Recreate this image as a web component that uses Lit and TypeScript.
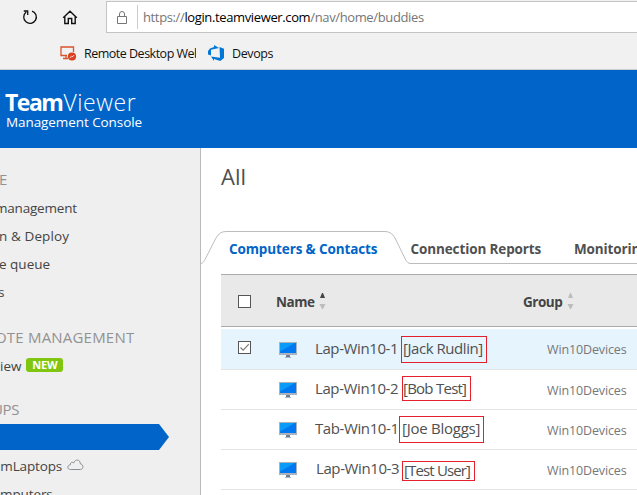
import { LitElement, html, css } from "lit";
import { customElement } from "lit/decorators.js";
import { classMap } from "lit/directives/class-map.js";

const monitor = html`<svg class="monitor" width="18" height="17" viewBox="0 0 18 17">
  <rect x="0" y="0" width="18" height="13" fill="#a9b4bf" />
  <rect x="1" y="1" width="16" height="10" fill="#0078f0" />
  <path d="M1 1H16L1 9.5Z" fill="#0a9af8" />
  <rect x="7" y="13" width="4" height="2" fill="#6f7f8e" />
  <rect x="6" y="15" width="6" height="1" fill="#a9b4bf" />
</svg>`;

interface Device { name: string; owner: string; cls: string; checked: boolean }

const devices: Device[] = [
  { name: "Lap-Win10-1", owner: "[Jack Rudlin]", cls: "r1", checked: true },
  { name: "Lap-Win10-2", owner: "[Bob Test]", cls: "r2", checked: false },
  { name: "Tab-Win10-1", owner: "[Joe Bloggs]", cls: "r3", checked: false },
  { name: "Lap-Win10-3", owner: "[Test User]", cls: "r4", checked: false },
];

@customElement("browser-bar")
export class BrowserBar extends LitElement {
  static styles = css`
    :host { display: block; height: 69px; background: #f1f1f1; border-bottom: 1px solid #cbcbcb; font-family: "Open Sans", "Noto Sans", sans-serif; color: #111; white-space: nowrap; overflow: hidden; }
    .nav { display: flex; height: 33px; }
    .reload { margin: 9px 0 0 22px; }
    .home { margin: 9px 0 0 24px; }
    .address { box-sizing: border-box; flex: 1; margin: 1px 0 0 28px; height: 32px; background: #fff; border: 1px solid #c4c4c4; border-right: 0; display: flex; }
    .lock { margin: 9px 0 0 9px; }
    .sep { width: 1px; height: 24px; margin: 3px 5px 0 9px; background: #ccc; }
    .url { font-size: 13px; line-height: 31px; letter-spacing: -0.37px; color: #767676; }
    .url b { font-weight: 400; color: #000; }
    .favs { display: flex; height: 36px; line-height: 42px; font-size: 12.5px; }
    .rdp { margin: 13px 7px 0 60px; }
    .rdpname { width: 112px; overflow: hidden; letter-spacing: -0.5px; }
    .dev { margin: 12px 7px 0 12px; }
    .devname { letter-spacing: -0.4px; }
  `;
  render() {
    return html`
      <div class="nav">
        <svg class="reload" width="16" height="16" viewBox="0 0 16 16" fill="none" stroke="#111" stroke-width="1.3"><path d="M10 2.1A6.3 6.3 0 1 1 4.2 3.1M1.8 2H5.7V6" /></svg>
        <svg class="home" width="16" height="16" viewBox="0 0 16 16" fill="none" stroke="#111" stroke-width="1.4"><path d="M1.2 8.8L8 2.2L14.8 8.8M2.8 7.8V14.5H6.3V9.5H9.7V14.5H13.2V7.8" /></svg>
        <div class="address">
          <svg class="lock" width="12" height="14" viewBox="0 0 12 14" fill="none" stroke="#777" stroke-width="1"><path d="M1.5 5.5H10.5V12.5H1.5ZM3.5 5.5V3A2.5 2.5 0 0 1 8.5 3V5.5" /></svg>
          <span class="sep"></span>
          <span class="url">https://<b>login.teamviewer.com</b>/nav/home/buddies</span>
        </div>
      </div>
      <div class="favs">
        <svg class="rdp" width="17" height="15" viewBox="0 0 17 15"><path d="M7 9.5H1V1H13.5V6M3 12.5H8M6 9.5V12.5" fill="none" stroke="#d9532c" stroke-width="1.3" /><circle cx="12" cy="10.5" r="4.1" fill="#d9401f" /><path d="M9.8 11.8L11.7 10.1M12 11.2L14.1 9.1" stroke="#fff" stroke-width="0.9" /></svg>
        <span class="rdpname">Remote Desktop Web</span>
        <svg class="dev" width="17" height="17" viewBox="0 0 17 17"><path d="M0 6L2 3.6L6 2V0L11 3.1L3 4.8V10.5L0 9.5ZM11.5 2.1L16 3.8V13L12.3 16L6 14V16L3 11.5L12 12.7Z" fill="#0078d7" /></svg>
        <span class="devname">Devops</span>
      </div>`;
  }
}

@customElement("side-menu")
export class SideMenu extends LitElement {
  static styles = css`
    :host { display: block; box-sizing: border-box; width: 201px; height: 347px; padding-top: 18px; background: #efefef; border-right: 1px solid #b9b9b9; font: 13.5px/28px "Open Sans", "Noto Sans", sans-serif; color: #444; white-space: nowrap; overflow: hidden; }
    .h { height: 28px; line-height: 27px; color: #929292; font-size: 15px; }
    .i { height: 28px; display: flex; }
    .gap { margin-top: 18px; }
    .remote { letter-spacing: 0.2px; margin-left: -5px; }
    .e { margin-left: -1px; }
    .mgmt { margin-left: -5px; letter-spacing: -0.2px; }
    .n { margin-left: -1px; letter-spacing: 0.1px; }
    .s { margin-left: -2px; }
    .ups { margin: 16px 0 0 -8px; letter-spacing: -0.4px; }
    .new { height: 14px; margin: 6px 0 0 5px; width: 37px; border-radius: 3px; background: #80c610; color: #fff; font: 700 11px/14px "Open Sans", sans-serif; text-align: center; letter-spacing: -0.1px; }
    .active { width: 169px; height: 26px; background: #0064c8; clip-path: polygon(0 0, 159px 0, 100% 50%, 159px 100%, 0 100%); }
    .lap { margin: 2px 0 0 -7px; letter-spacing: -0.15px; }
    .comp { margin-left: -8px; letter-spacing: -0.1px; }
    .cloud { margin: 7px 0 0 5px; }
  `;
  render() {
    return html`
      <div class="h e">E</div>
      <div class="i mgmt">management</div>
      <div class="i n">n &amp; Deploy</div>
      <div class="i e">e queue</div>
      <div class="i s">s</div>
      <div class="h gap remote">OTE MANAGEMENT</div>
      <div class="i"><span>iew</span><span class="new">NEW</span></div>
      <div class="h ups">UPS</div>
      <div class="active"></div>
      <div class="i lap"><span>amLaptops</span><svg class="cloud" width="17" height="12" viewBox="0 0 17 12" fill="none" stroke="#888d94" stroke-width="1"><path d="M3.5 10.5C0 10.5 0 6.2 3.3 5.8C3 3.4 5.6 2.6 6.8 3.9C8-.2 13.5.2 13.2 4.7C17 5.5 16.5 10.5 13.5 10.5Z" /></svg></div>
      <div class="i comp">omputers</div>`;
  }
}

@customElement("contact-table")
export class ContactTable extends LitElement {
  static styles = css`
    :host { display: block; margin-left: 20px; font-family: "Open Sans", "Noto Sans", sans-serif; color: #505050; white-space: nowrap; }
    .head { box-sizing: border-box; height: 53px; display: grid; grid-template-columns: 55px 247px 1fr; background: #e9e9e9; border-top: 1px solid #ababab; border-bottom: 1px solid #ababab; margin-bottom: 2px; font: 700 13.5px/55px "Open Sans", sans-serif; color: #444; }
    .check { box-sizing: border-box; width: 13px; height: 13px; border: 1px solid #555; background: #fff; margin-left: 17px; display: block; }
    .head .check { margin-top: 20px; }
    .name { letter-spacing: -0.5px; }
    .group { letter-spacing: -0.5px; }
    .th { display: flex; }
    .sort { margin: 17px 0 0 5px; }
    .row { box-sizing: border-box; height: 40px; display: grid; grid-template-columns: 58px 36px 232px 1fr; border-bottom: 1px solid #e3e3e3; line-height: 37px; }
    .row.first { height: 41px; line-height: 39px; }
    .checked { background: #e6f4fe; }
    .row .check { margin-top: 12px; }
    .check svg { display: block; }
    .monitor { margin: 12px 0 0 0; }
    .first .monitor { margin-top: 13px; }
    .device { display: flex; font-size: 15px; letter-spacing: -0.4px; }
    .owner { box-sizing: border-box; border: 1px solid #e3202b; height: 27px; line-height: 23px; margin: 7px 0 0 3px; padding-left: 1px; letter-spacing: -0.45px; }
    .label { box-sizing: border-box; width: 83px; }
    .r1 .owner { width: 86px; }
    .r2 .owner { width: 69px; height: 25px; margin-left: 4px; margin-top: 6px; padding-left: 0; letter-spacing: -0.75px; }
    .r3 .label { width: 82px; }
    .r3 .owner { width: 85px; margin-left: 2px; margin-top: 6px; padding-left: 2px; letter-spacing: -0.25px; }
    .r4 .label { padding-left: 1px; }
    .r4 .owner { width: 73px; height: 20px; line-height: 16px; margin: 11px 0 0 4px; letter-spacing: -0.85px; }
    .g { font-size: 12.5px; line-height: 42px; color: #777; letter-spacing: -0.13px; }
  `;
  sorter(up: string) {
    return html`<svg class="sort" width="7" height="18" viewBox="0 0 7 18"><path d="M1 6L3 1H4L6 6Z" fill=${up} /><path d="M.5 12H6.5L4 17H3Z" fill="#bdbdbd" /></svg>`;
  }
  render() {
    return html`
      <div class="head">
        <span class="check"></span>
        <span class="th name">Name${this.sorter("#444")}</span>
        <span class="th group">Group${this.sorter("#bdbdbd")}</span>
      </div>
      ${devices.map((d, i) => html`
        <div class=${classMap({ row: true, first: i === 0, checked: d.checked, [d.cls]: true })}>
          <span>${d.checked ? html`<span class="check"><svg width="11" height="11" viewBox="0 0 11 11" fill="none" stroke="#777" stroke-width="1.1"><path d="M1.5 5.5L4.2 8.2L9.8 2.2" /></svg></span>` : ""}</span>
          ${monitor}
          <span class="device"><span class="label">${d.name}</span><span class="owner">${d.owner}</span></span>
          <span class="g">Win10Devices</span>
        </div>`)}`;
  }
}

@customElement("app-root")
export class AppRoot extends LitElement {
  static styles = css`
    :host { display: block; width: 637px; height: 495px; overflow: hidden; background: #fff; font-family: "Open Sans", "Noto Sans", sans-serif; white-space: nowrap; }
    .banner { box-sizing: border-box; height: 78px; padding: 20px 0 0 5px; background: #0064c8; color: #fff; }
    .brand { font-size: 23px; line-height: 25px; letter-spacing: -1.5px; }
    .brand span { font-weight: 300; letter-spacing: 0.6px; margin-left: 1px; }
    .sub { margin-left: 1px; font-size: 13.5px; line-height: 14px; letter-spacing: -0.08px; }
    .body { display: flex; }
    main { flex: 1; min-width: 0; overflow: hidden; }
    h1 { margin: 13px 0 0 20px; height: 70px; font-size: 22px; line-height: 30px; font-weight: 400; letter-spacing: 0; color: #505050; }
    .tabs { height: 43px; display: grid; grid-template-columns: 1fr; }
    .outline, .labels { grid-area: 1 / 1; }
    .labels { display: flex; font-weight: 700; font-size: 13.5px; line-height: 37px; letter-spacing: -0.12px; color: #505050; }
    .one { box-sizing: border-box; width: 209.5px; padding-left: 28px; color: #0064c8; }
    .two { width: 163.5px; }
  `;
  render() {
    return html`
      <browser-bar></browser-bar>
      <div class="banner">
        <div class="brand"><b>Team</b><span>Viewer</span></div>
        <div class="sub">Management Console</div>
      </div>
      <div class="body">
        <side-menu></side-menu>
        <main>
          <h1>All</h1>
          <div class="tabs">
            <svg class="outline" width="436" height="34" viewBox="0 0 436 34" fill="none" stroke="#bdbdbd" stroke-width="1"><path d="M0 32.5C2 32 3 30 4 28.5L15 7Q18.5 .5 25 .5H184Q190.5 .5 194 7L205 29.5Q207 32.5 209 32.5H436" /></svg>
            <div class="labels"><span class="one">Computers &amp; Contacts</span><span class="two">Connection Reports</span><span>Monitoring</span></div>
          </div>
          <contact-table></contact-table>
        </main>
      </div>`;
  }
}
